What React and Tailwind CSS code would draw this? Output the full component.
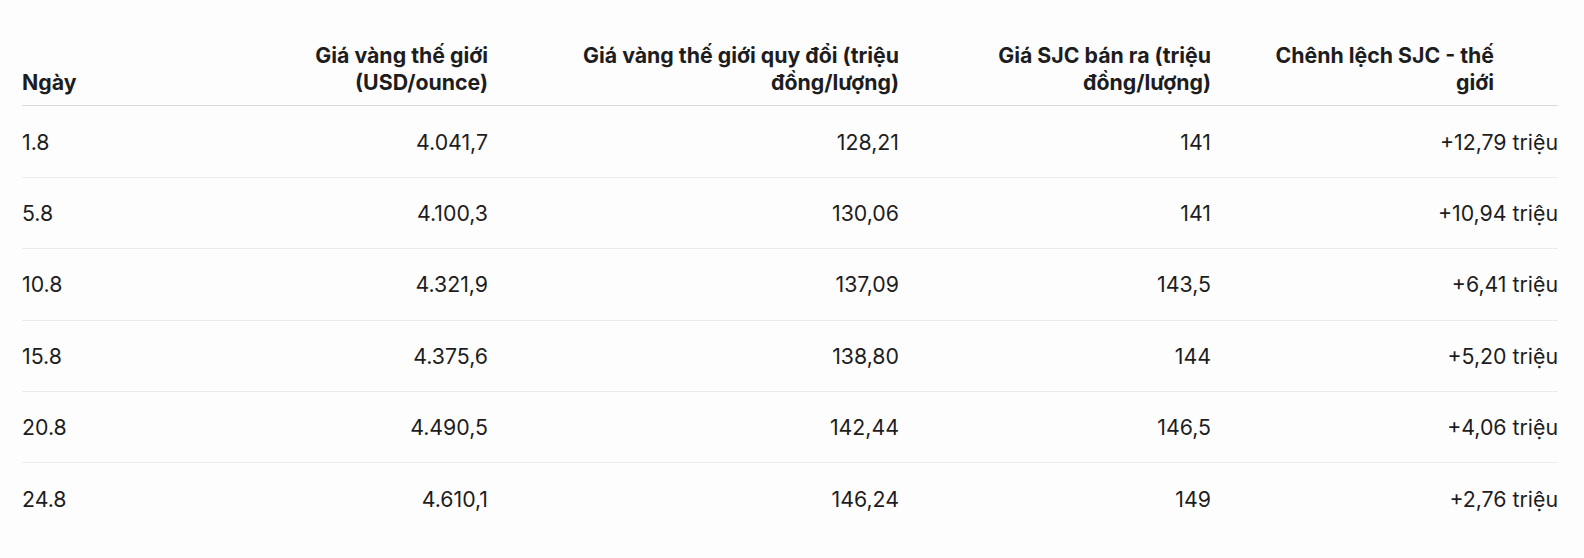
const headers = [
  { lines: ['Ngày'], align: 'text-left' },
  { lines: ['Giá vàng thế giới', '(USD/ounce)'], align: 'text-right' },
  { lines: ['Giá vàng thế giới quy đổi (triệu', 'đồng/lượng)'], align: 'text-right' },
  { lines: ['Giá SJC bán ra (triệu', 'đồng/lượng)'], align: 'text-right' },
  { lines: ['Chênh lệch SJC - thế', 'giới'], align: 'text-right pr-[64px]' }
];

const rows = [
  ['1.8', '4.041,7', '128,21', '141', '+12,79 triệu'],
  ['5.8', '4.100,3', '130,06', '141', '+10,94 triệu'],
  ['10.8', '4.321,9', '137,09', '143,5', '+6,41 triệu'],
  ['15.8', '4.375,6', '138,80', '144', '+5,20 triệu'],
  ['20.8', '4.490,5', '142,44', '146,5', '+4,06 triệu'],
  ['24.8', '4.610,1', '146,24', '149', '+2,76 triệu']
];

const App = () => {
  return (
    <div className="min-h-[558px] bg-[#fdfdfd] pt-[42px] pl-[22px] text-[#1d1d1f] font-['Inter','Noto_Sans',sans-serif]">
      <table className="w-[1536px] table-fixed border-collapse text-[21.3px]">
        <colgroup>
          <col className="w-[200px]" />
          <col className="w-[266px]" />
          <col className="w-[411px]" />
          <col className="w-[312px]" />
          <col className="w-[347px]" />
        </colgroup>
        <thead>
          <tr className="border-b border-[#d9d9d9]">
            {headers.map((h, i) => (
              <th
                key={i}
                className={`${h.align} align-bottom pb-[10px] font-bold leading-[26.7px] whitespace-nowrap`}
              >
                {h.lines.map((l, j) => (
                  <div key={j}>{l}</div>
                ))}
              </th>
            ))}
          </tr>
        </thead>
        <tbody>
          {rows.map((r, i) => (
            <tr key={i} className={i < rows.length - 1 ? 'border-b border-[#ececec]' : ''}>
              {r.map((c, j) => (
                <td
                  key={j}
                  className={`${j === 0 ? 'text-left' : 'text-right'} h-[71.4px] leading-[28px] align-middle whitespace-nowrap`}
                >
                  {c}
                </td>
              ))}
            </tr>
          ))}
        </tbody>
      </table>
    </div>
  );
};

export default App;
